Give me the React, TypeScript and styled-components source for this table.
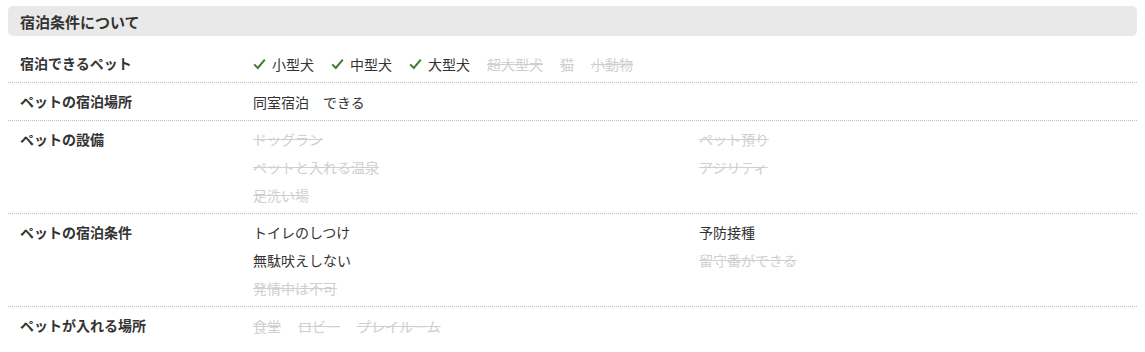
import React from 'react';
import styled, { createGlobalStyle } from 'styled-components';

const GlobalStyle = createGlobalStyle`
  body {
    margin: 0;
    background: #fff;
    font-family: "Noto Sans CJK JP", "Noto Sans", sans-serif;
    color: #333;
  }
`;

const Wrapper = styled.div`
  padding: 6px 8px 0;
`;

const Heading = styled.h2`
  margin: 0 0 9px;
  height: 30px;
  display: flex;
  align-items: center;
  padding: 0 12px;
  background: #e9e9e9;
  border-radius: 5px;
  font-size: 15px;
  font-weight: 700;
  color: #333;
`;

const Row = styled.div<{ last?: boolean }>`
  display: grid;
  grid-template-columns: 245px 1fr;
  padding: 4px 0;
  border-bottom: ${(p) => (p.last ? 'none' : '1px dotted #bdbdbd')};
`;

const Label = styled.div`
  padding-left: 12px;
  font-size: 14px;
  font-weight: 700;
  line-height: 28px;
  height: 28px;
`;

const Inline = styled.div`
  display: flex;
  flex-wrap: wrap;
  align-items: center;
  min-height: 29px;
  column-gap: 17px;
`;

const Columns = styled.div`
  display: grid;
  grid-template-columns: 446px 1fr;
  grid-auto-flow: column;
  grid-template-rows: repeat(3, 28px);
`;

const Item = styled.span<{ off?: boolean }>`
  display: inline-flex;
  align-items: center;
  gap: 6px;
  height: 28px;
  font-size: 14px;
  line-height: 28px;
  white-space: pre;
  color: ${(p) => (p.off ? '#cfcfcf' : '#333')};
  text-decoration: ${(p) => (p.off ? 'line-through' : 'none')};
`;

const Check = () => (
  <svg width="13" height="12" viewBox="0 0 13 12">
    <path d="M1.2 6.4 L4.8 10 L11.8 1.6" fill="none" stroke="#3f7d2c" strokeWidth="2" />
  </svg>
);

type Opt = { text: string; on: boolean; check?: boolean };

const pets: Opt[] = [
  { text: '小型犬', on: true, check: true },
  { text: '中型犬', on: true, check: true },
  { text: '大型犬', on: true, check: true },
  { text: '超大型犬', on: false },
  { text: '猫', on: false },
  { text: '小動物', on: false },
];

const facilities: Opt[] = [
  { text: 'ドッグラン', on: false },
  { text: 'ペットと入れる温泉', on: false },
  { text: '足洗い場', on: false },
  { text: 'ペット預り', on: false },
  { text: 'アジリティ', on: false },
];

const conditions: Opt[] = [
  { text: 'トイレのしつけ', on: true },
  { text: '無駄吠えしない', on: true },
  { text: '発情中は不可', on: false },
  { text: '予防接種', on: true },
  { text: '留守番ができる', on: false },
];

const places: Opt[] = [
  { text: '食堂', on: false },
  { text: 'ロビー', on: false },
  { text: 'プレイルーム', on: false },
];

const renderItems = (list: Opt[]) =>
  list.map((o) => (
    <Item key={o.text} off={!o.on}>
      {o.check && <Check />}
      {o.text}
    </Item>
  ));

const App = () => {
  return (
    <Wrapper>
      <GlobalStyle />
      <Heading>宿泊条件について</Heading>
      <Row>
        <Label>宿泊できるペット</Label>
        <Inline>{renderItems(pets)}</Inline>
      </Row>
      <Row>
        <Label>ペットの宿泊場所</Label>
        <Inline>
          <Item>同室宿泊　できる</Item>
        </Inline>
      </Row>
      <Row>
        <Label>ペットの設備</Label>
        <Columns>{renderItems(facilities)}</Columns>
      </Row>
      <Row>
        <Label>ペットの宿泊条件</Label>
        <Columns>{renderItems(conditions)}</Columns>
      </Row>
      <Row last>
        <Label>ペットが入れる場所</Label>
        <Inline>{renderItems(places)}</Inline>
      </Row>
    </Wrapper>
  );
};

export default App;
